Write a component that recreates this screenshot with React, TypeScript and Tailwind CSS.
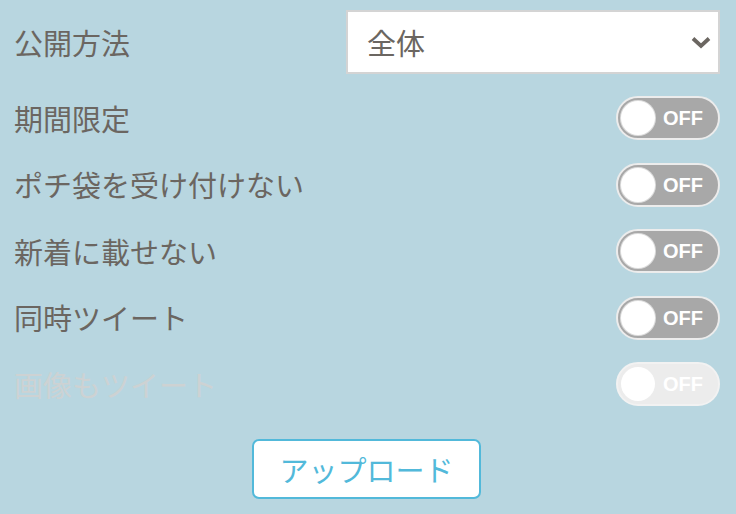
import React from "react";

const font = { fontFamily: '"Noto Sans CJK JP", "Noto Sans", sans-serif' };

function Toggle({ disabled = false }: { disabled?: boolean }) {
  return (
    <div
      className={
        "relative flex h-[44px] w-[104px] items-center rounded-full border-2 " +
        (disabled ? "border-[#f2f2f2] bg-[#ececec]" : "border-[#ececec] bg-[#a8a8a8]")
      }
    >
      <div
        className={
          "ml-[3px] h-[34px] w-[34px] rounded-full bg-white " +
          (disabled ? "" : "shadow-[0_0_0_1px_#dcdcdc]")
        }
      />
      <span
        className="ml-[8px] text-[20px] font-bold leading-none text-white"
        style={{ fontFamily: '"Liberation Sans", Arial, sans-serif' }}
      >
        OFF
      </span>
    </div>
  );
}

function Row({ label, disabled = false }: { label: string; disabled?: boolean }) {
  return (
    <div className="flex h-[44px] items-center justify-between">
      <span
        className={"text-[29px] leading-none " + (disabled ? "text-[#cdd2d3]" : "text-[#6b6661]")}
      >
        {label}
      </span>
      <Toggle disabled={disabled} />
    </div>
  );
}

export default function App() {
  return (
    <div className="h-[514px] w-[736px] overflow-hidden bg-[#b8d6e0]" style={font}>
      <div className="pl-[14px] pr-[16px] pt-[10px]">
        <div className="flex h-[64px] items-center justify-between">
          <span className="text-[29px] leading-none text-[#6b6661]">公開方法</span>
          <div className="flex h-[64px] w-[374px] items-center justify-between border-2 border-[#d4d4d4] bg-white pl-[19px] pr-[7px]">
            <span className="text-[29px] leading-none text-[#6b6661]">全体</span>
            <svg width="20" height="13" viewBox="0 0 20 13">
              <path d="M2 2.5 L10 10 L18 2.5" fill="none" stroke="#6b6661" strokeWidth="3.8" />
            </svg>
          </div>
        </div>
        <div className="mt-[22px] flex flex-col gap-[22.5px]">
          <Row label="期間限定" />
          <Row label="ポチ袋を受け付けない" />
          <Row label="新着に載せない" />
          <Row label="同時ツイート" />
          <Row label="画像もツイート" disabled />
        </div>
        <div className="mt-[33px] flex justify-center pr-[1px]">
          <button className="flex h-[60px] w-[229px] items-center justify-center rounded-[7px] border-2 border-[#52b9da] bg-white text-[29px] leading-none text-[#52b9da]">
            アップロード
          </button>
        </div>
      </div>
    </div>
  );
}
